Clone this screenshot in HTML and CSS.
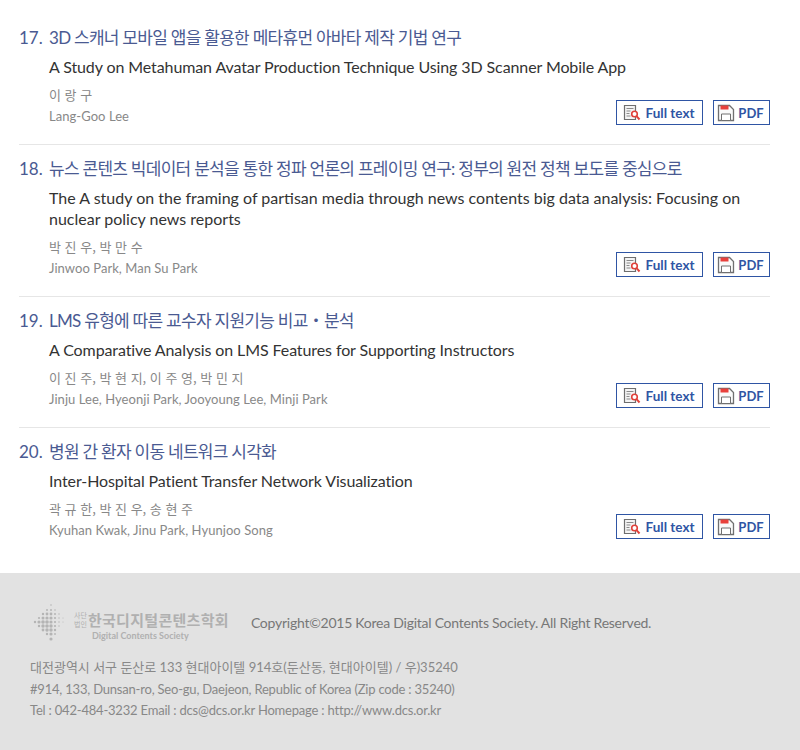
FILE: index.html
```html
<!DOCTYPE html>
<html lang="ko">
<head>
  <meta charset="UTF-8">
  <title>Korea Digital Contents Society</title>
  <link rel="stylesheet" href="styles.css">
</head>
<body>
  <main class="list">
    <article class="item">
      <h3 class="title"><span class="num">17.</span><span>3D 스캐너 모바일 앱을 활용한 메타휴먼 아바타 제작 기법 연구</span></h3>
      <p class="sub">A Study on Metahuman Avatar Production Technique Using 3D Scanner Mobile App</p>
      <div class="bottom">
        <div class="authors">
          <p class="ko">이 랑 구</p>
          <p class="en">Lang-Goo Lee</p>
        </div>
        <div class="btns">
          <a class="btn btn-full"><svg class="ico" viewBox="0 0 18 18"><use href="#i-full"/></svg>Full text</a>
          <a class="btn btn-pdf"><svg class="ico" viewBox="0 0 18 18"><use href="#i-pdf"/></svg>PDF</a>
        </div>
      </div>
    </article>
    <article class="item">
      <h3 class="title"><span class="num">18.</span><span>뉴스 콘텐츠 빅데이터 분석을 통한 정파 언론의 프레이밍 연구: 정부의 원전 정책 보도를 중심으로</span></h3>
      <p class="sub sub-wide">The A study on the framing of partisan media through news contents big data analysis: Focusing on nuclear policy news reports</p>
      <div class="bottom">
        <div class="authors">
          <p class="ko">박 진 우, 박 만 수</p>
          <p class="en">Jinwoo Park, Man Su Park</p>
        </div>
        <div class="btns">
          <a class="btn btn-full"><svg class="ico" viewBox="0 0 18 18"><use href="#i-full"/></svg>Full text</a>
          <a class="btn btn-pdf"><svg class="ico" viewBox="0 0 18 18"><use href="#i-pdf"/></svg>PDF</a>
        </div>
      </div>
    </article>
    <article class="item">
      <h3 class="title"><span class="num">19.</span><span>LMS 유형에 따른 교수자 지원기능 비교・분석</span></h3>
      <p class="sub">A Comparative Analysis on LMS Features for Supporting Instructors</p>
      <div class="bottom">
        <div class="authors">
          <p class="ko">이 진 주, 박 현 지, 이 주 영, 박 민 지</p>
          <p class="en">Jinju Lee, Hyeonji Park, Jooyoung Lee, Minji Park</p>
        </div>
        <div class="btns">
          <a class="btn btn-full"><svg class="ico" viewBox="0 0 18 18"><use href="#i-full"/></svg>Full text</a>
          <a class="btn btn-pdf"><svg class="ico" viewBox="0 0 18 18"><use href="#i-pdf"/></svg>PDF</a>
        </div>
      </div>
    </article>
    <article class="item">
      <h3 class="title"><span class="num">20.</span><span>병원 간 환자 이동 네트워크 시각화</span></h3>
      <p class="sub">Inter-Hospital Patient Transfer Network Visualization</p>
      <div class="bottom">
        <div class="authors">
          <p class="ko">곽 규 한, 박 진 우, 송 현 주</p>
          <p class="en">Kyuhan Kwak, Jinu Park, Hyunjoo Song</p>
        </div>
        <div class="btns">
          <a class="btn btn-full"><svg class="ico" viewBox="0 0 18 18"><use href="#i-full"/></svg>Full text</a>
          <a class="btn btn-pdf"><svg class="ico" viewBox="0 0 18 18"><use href="#i-pdf"/></svg>PDF</a>
        </div>
      </div>
    </article>
  </main>

  <footer class="footer">
    <div class="foot-top">
      <div class="logo">
        <svg class="logo-dots" width="36" height="38" viewBox="0 0 36 38">
          <g fill="#b4b4b4">
            <circle cx="18" cy="2" r=".8"/>
            <circle cx="14" cy="7" r="1"/><circle cx="18" cy="7" r="1"/><circle cx="22" cy="7" r=".8"/>
            <circle cx="10" cy="11" r="1.2"/><circle cx="14" cy="11" r="1.4"/><circle cx="18" cy="11" r="1.4"/><circle cx="22" cy="11" r="1"/><circle cx="26" cy="11" r=".7"/>
            <circle cx="6" cy="15" r="1.1"/><circle cx="10" cy="15" r="1.5"/><circle cx="14" cy="15" r="1.6"/><circle cx="18" cy="15" r="1.6"/><circle cx="22" cy="15" r="1.1"/><circle cx="26" cy="15" r=".7"/><circle cx="30" cy="15" r=".5"/>
            <circle cx="2" cy="19" r="1.2"/><circle cx="6" cy="19" r="1.6"/><circle cx="10" cy="19" r="1.8"/><circle cx="14" cy="19" r="1.8"/><circle cx="18" cy="19" r="1.6"/><circle cx="22" cy="19" r="1.1"/><circle cx="26" cy="19" r=".7"/><circle cx="30" cy="19" r=".5"/>
            <circle cx="6" cy="23" r="1.2"/><circle cx="10" cy="23" r="1.7"/><circle cx="14" cy="23" r="1.8"/><circle cx="18" cy="23" r="1.7"/><circle cx="22" cy="23" r="1.1"/><circle cx="26" cy="23" r=".7"/>
            <circle cx="10" cy="27" r="1.4"/><circle cx="14" cy="27" r="1.7"/><circle cx="18" cy="27" r="1.7"/><circle cx="22" cy="27" r="1.2"/>
            <circle cx="14" cy="31" r="1.2"/><circle cx="18" cy="31" r="1.6"/><circle cx="22" cy="31" r=".9"/>
            <circle cx="18" cy="36" r="1.6"/>
          </g>
        </svg>
        <div class="logo-text">
          <div class="logo-main"><span class="logo-small">사단<br>법인</span><span class="logo-name">한국디지털콘텐츠학회</span></div>
          <div class="logo-en">Digital Contents Society</div>
        </div>
      </div>
      <p class="copy">Copyright©2015 Korea Digital Contents Society. All Right Reserved.</p>
    </div>
    <p class="addr addr-ko">대전광역시 서구 둔산로 133 현대아이텔 914호(둔산동, 현대아이텔) / 우)35240</p>
    <p class="addr">#914, 133, Dunsan-ro, Seo-gu, Daejeon, Republic of Korea (Zip code : 35240)</p>
    <p class="addr">Tel : 042-484-3232 Email : dcs@dcs.or.kr Homepage : http://www.dcs.or.kr</p>
  </footer>

  <svg class="defs" width="0" height="0">
    <symbol id="i-full" viewBox="0 0 18 18">
      <path d="M1.5 1.5h11v14h-11z" fill="#f4f4f4" stroke="#6e6e6e" stroke-width="1.2"/>
      <path d="M3.5 4.5h7M3.5 7h4M3.5 9.5h3M3.5 12h4" stroke="#8a8a8a" fill="none"/>
      <circle cx="11.5" cy="10" r="2.8" fill="#fff" stroke="#e0413a" stroke-width="1.6"/>
      <path d="M13.5 12.2l3 3.3" stroke="#e0413a" stroke-width="2"/>
    </symbol>
    <symbol id="i-pdf" viewBox="0 0 18 18">
      <path d="M1.5 1.5h11l4 4v11h-15z" fill="#fafafa" stroke="#707070" stroke-width="1.3"/>
      <path d="M3.5 1.5h8v4h-8z" fill="#e8413c"/>
      <path d="M4.5 10h9v6.5h-9z" fill="#fff" stroke="#707070"/>
    </symbol>
  </svg>
</body>
</html>
```
FILE: styles.css
```css
* {
  margin: 0;
  padding: 0;
  box-sizing: border-box;
}

body {
  font-family: Lato, "Noto Sans CJK KR", sans-serif;
  background: #ffffff;
  color: #333333;
}

.list {
  padding: 14px 30px 0 19px;
}

.item {
  border-bottom: 1px solid #e6e6e6;
  padding: 12px 0 18px;
}

.item:last-child {
  border-bottom: none;
}

.title {
  display: flex;
  font-size: 17px;
  font-weight: 400;
  line-height: 24px;
  color: #4a5a92;
  letter-spacing: -0.72px;
}

.num {
  width: 30px;
  flex-shrink: 0;
  letter-spacing: 0;
}

.sub {
  margin: 6px 0 0 30px;
  font-size: 16px;
  line-height: 21px;
  color: #333333;
  letter-spacing: -0.1px;
}

.sub-wide {
  letter-spacing: 0;
}

.bottom {
  display: flex;
  justify-content: space-between;
  align-items: flex-end;
  margin: 7px 0 0 30px;
}

.authors .ko {
  font-family: "Noto Sans CJK KR", sans-serif;
  font-size: 13px;
  line-height: 22px;
  color: #888888;
}

.authors .en {
  font-size: 13px;
  line-height: 20px;
  color: #888888;
  letter-spacing: 0.05px;
}

.btns {
  display: flex;
  gap: 10px;
  margin-bottom: 1px;
}

.btn {
  display: flex;
  align-items: center;
  justify-content: center;
  gap: 5px;
  height: 25px;
  padding-right: 2px;
  border: 1px solid #2f55a4;
  color: #2f55a4;
  font-size: 13.5px;
  font-weight: 700;
}

.btn-full {
  width: 87px;
}

.btn-pdf {
  width: 57px;
  gap: 3px;
  font-size: 13px;
}

.ico {
  width: 18px;
  height: 18px;
}

.defs {
  position: absolute;
}

.footer {
  margin-top: 15px;
  height: 177px;
  background: #e2e2e2;
  padding: 30px 30px 0;
  color: #888888;
  font-size: 13px;
}

.foot-top {
  display: flex;
  align-items: center;
  gap: 22px;
  margin-bottom: 16px;
}

.logo {
  display: flex;
  align-items: flex-start;
  gap: 5px;
  color: #b0b0b0;
}

.logo-dots {
  margin-left: 3px;
}

.logo-text {
  padding-top: 7px;
}

.logo-main {
  display: flex;
  align-items: center;
  gap: 1px;
  font-family: "Noto Sans CJK KR", sans-serif;
}

.logo-small {
  font-size: 7px;
  line-height: 9px;
}

.logo-name {
  font-size: 15px;
  line-height: 20px;
  font-weight: 700;
  letter-spacing: 0.3px;
}

.logo-en {
  font-size: 9px;
  line-height: 11px;
  font-weight: 700;
  margin-left: 18px;
}

.copy {
  font-size: 14px;
  color: #777777;
  letter-spacing: -0.25px;
}

.addr {
  line-height: 21.5px;
  letter-spacing: -0.2px;
}

.addr-ko {
  letter-spacing: 0;
}
```
